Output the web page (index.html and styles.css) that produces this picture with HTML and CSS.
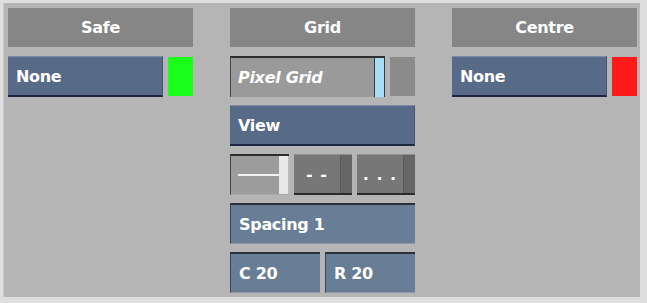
FILE: index.html
```html
<!DOCTYPE html>
<html lang="en">
  <head>
    <meta charset="utf-8" />
    <title>Safe / Grid / Centre</title>
    <link rel="stylesheet" href="styles.css">
  </head>
  <body>
    <div class="panel">
      <!-- Safe -->
      <div class="col">
        <div class="head">Safe</div>
        <div class="row">
          <div class="btn blue">None</div>
          <span class="swatch green"></span>
        </div>
      </div>

      <!-- Grid -->
      <div class="col">
        <div class="head">Grid</div>
        <div class="row">
          <div class="btn field">
            <span class="field-text">Pixel Grid</span>
            <span class="field-bar"></span>
          </div>
          <span class="swatch grey"></span>
        </div>
        <div class="row">
          <div class="btn blue">View</div>
        </div>
        <div class="row">
          <div class="btn style solid">
            <span class="style-mark"><span class="line"></span></span>
            <span class="style-knob"></span>
          </div>
          <div class="btn style">
            <span class="style-mark">- -</span>
            <span class="style-knob"></span>
          </div>
          <div class="btn style">
            <span class="style-mark">. . .</span>
            <span class="style-knob"></span>
          </div>
        </div>
        <div class="row">
          <div class="btn slate">Spacing 1</div>
        </div>
        <div class="row">
          <div class="btn slate">C 20</div>
          <div class="btn slate">R 20</div>
        </div>
      </div>

      <!-- Centre -->
      <div class="col">
        <div class="head">Centre</div>
        <div class="row">
          <div class="btn blue">None</div>
          <span class="swatch red"></span>
        </div>
      </div>
    </div>
  </body>
</html>
```

FILE: styles.css
```css
* {
  margin: 0;
  padding: 0;
  box-sizing: border-box;
}

body {
  margin: 0;
  background: #dedede;
  font-family: "DejaVu Sans", sans-serif;
  font-weight: bold;
  font-size: 16px;
  letter-spacing: -0.3px;
  color: #fff;
}

.panel {
  width: 637px;
  height: 294px;
  margin: 3px 0 0 3px;
  padding: 5px 0 0 4px;
  background: #b5b5b5;
  border-left: 1px solid #c8c8c8;
  display: grid;
  grid-template-columns: 185px 185px 185px;
  column-gap: 37px;
  align-items: start;
}

.col {
  display: flex;
  flex-direction: column;
  gap: 8px;
}

.head {
  height: 39px;
  margin-bottom: 1px;
  background: #868686;
  display: flex;
  align-items: center;
  justify-content: center;
}

.row {
  display: flex;
  gap: 5px;
  height: 41px;
  align-items: center;
}

.btn {
  flex: 1;
  height: 41px;
  display: flex;
  align-items: center;
  padding-left: 8px;
}

.blue {
  background: #576b89;
  border-top: 1px solid #7d8ca4;
  border-right: 1px solid #46556f;
  border-bottom: 2px solid #1e2640;
}

.slate {
  background: #687d96;
  border-top: 2px solid #2b2f3b;
  border-left: 1px solid #3e4554;
  border-bottom: 1px solid #8c98a6;
}

.swatch {
  width: 25px;
  height: 39px;
}

.green {
  background: #19ff19;
}

.red {
  background: #ff1a1a;
}

.grey {
  background: #8b8b8b;
}

/* text field with a slider bar on the right */
.field {
  padding-left: 0;
  background: #9a9a9a;
  border-top: 2px solid #2e2e2e;
  border-left: 1px solid #444;
  align-items: stretch;
}

.field-text {
  flex: 1;
  display: flex;
  align-items: center;
  padding-left: 7px;
  font-style: italic;
}

.field-bar {
  width: 11px;
  background: #a8dcf5;
  border-left: 1px solid #3a3a3a;
  border-right: 1px solid #3a3a3a;
}

/* line style buttons */
.style {
  padding-left: 0;
  align-items: stretch;
  background: #777;
  border-top: 1px solid #8e8e8e;
  border-bottom: 2px solid #2a2a2a;
}

.style-mark {
  flex: 1;
  display: flex;
  align-items: center;
  justify-content: center;
  letter-spacing: 1px;
}

.style-knob {
  width: 12px;
  background: #666;
  border-left: 1px solid #5a5a5a;
}

.style.solid {
  background: #9c9c9c;
  border-top: 2px solid #2e2e2e;
  border-left: 1px solid #444;
  border-bottom: 1px solid #a8a8a8;
}

.style.solid .style-mark {
  justify-content: flex-start;
  padding-left: 7px;
}

.style.solid .line {
  display: block;
  width: 100%;
  height: 2px;
  background: #f2f2f2;
}

.style.solid .style-knob {
  width: 10px;
  background: #e8e8e8;
  border-left: none;
  border-right: 1px solid #bdbdbd;
}
```
